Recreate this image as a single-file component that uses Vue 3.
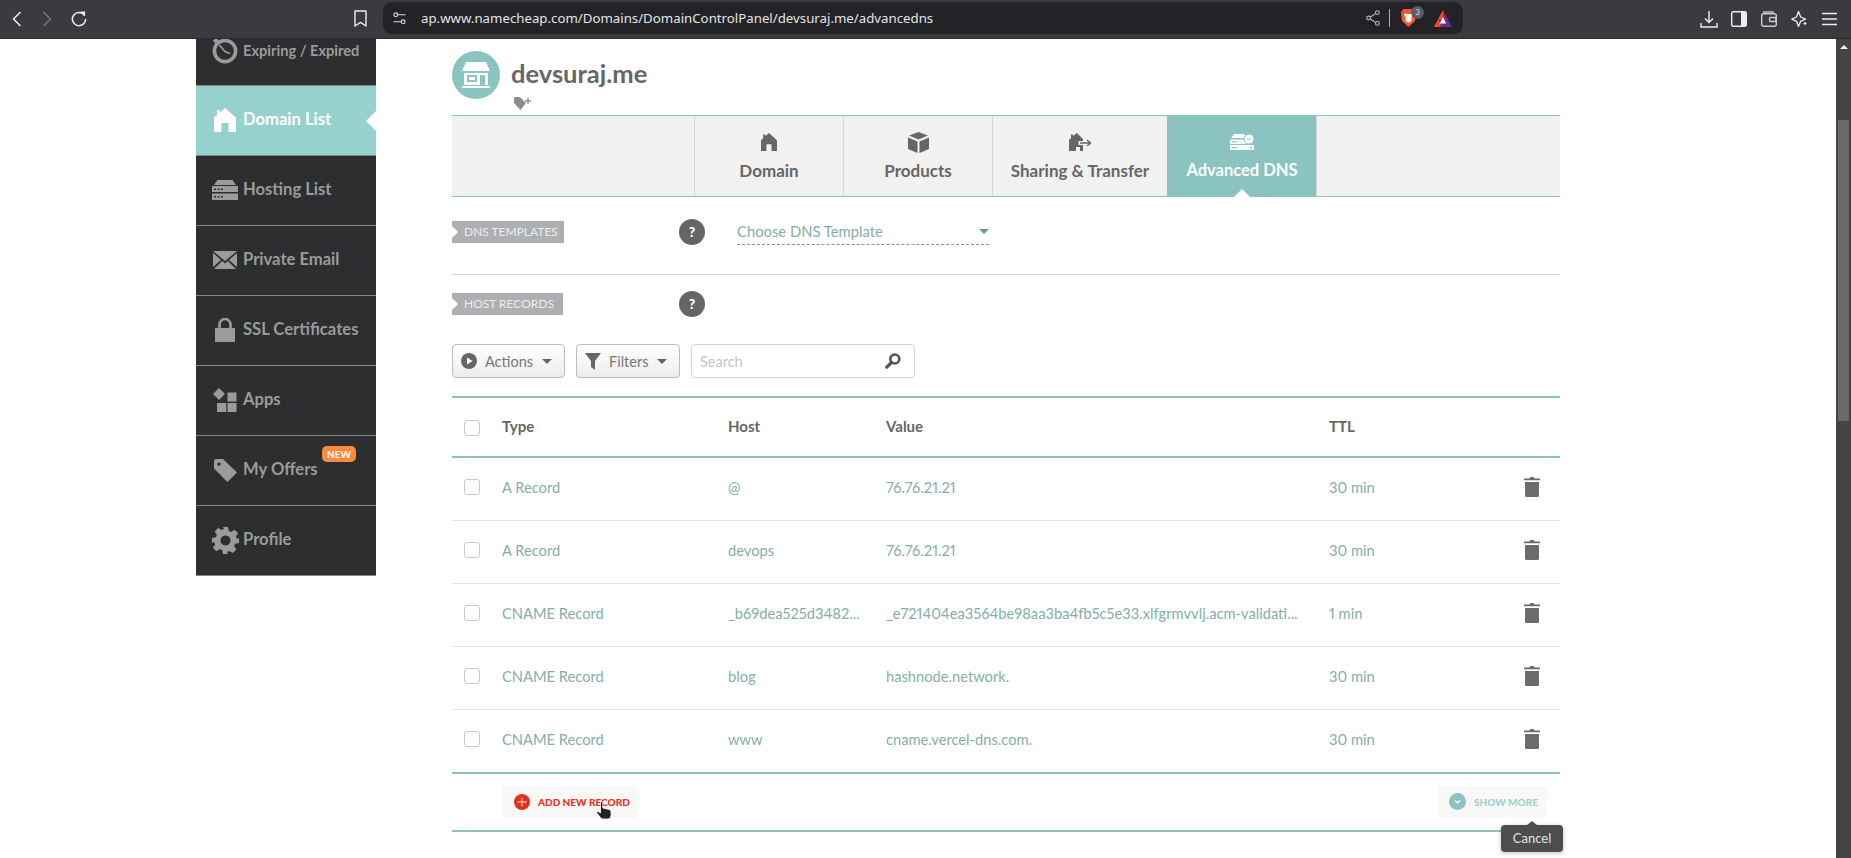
<script setup>
const navItems = [
  { label: 'Expiring / Expired', icon: 'clock', small: true },
  { label: 'Domain List', icon: 'home', active: true },
  { label: 'Hosting List', icon: 'server' },
  { label: 'Private Email', icon: 'mail' },
  { label: 'SSL Certificates', icon: 'lock' },
  { label: 'Apps', icon: 'apps' },
  { label: 'My Offers', icon: 'tag', badge: 'NEW' },
  { label: 'Profile', icon: 'gear' },
]

const tabs = [
  { label: 'Domain', icon: 'home' },
  { label: 'Products', icon: 'box' },
  { label: 'Sharing & Transfer', icon: 'share', wide: true },
  { label: 'Advanced DNS', icon: 'dns', active: true },
]

const records = [
  { type: 'A Record', host: '@', value: '76.76.21.21', ttl: '30 min' },
  { type: 'A Record', host: 'devops', value: '76.76.21.21', ttl: '30 min' },
  { type: 'CNAME Record', host: '_b69dea525d3482...', value: '_e721404ea3564be98aa3ba4fb5c5e33.xlfgrmvvlj.acm-validati...', ttl: '1 min' },
  { type: 'CNAME Record', host: 'blog', value: 'hashnode.network.', ttl: '30 min' },
  { type: 'CNAME Record', host: 'www', value: 'cname.vercel-dns.com.', ttl: '30 min' },
]
</script>

<template>
  <div class="page">
    <header class="toolbar">
      <div class="nav-btns">
        <svg width="10" height="16" viewBox="0 0 10 16"><path d="M8.5 1 1.5 8l7 7" fill="none" stroke="#eee" stroke-width="1.5" /></svg>
        <svg class="forward" width="10" height="16" viewBox="0 0 10 16"><path d="M1.5 1l7 7-7 7" fill="none" stroke="#77777c" stroke-width="1.5" /></svg>
        <svg class="reload" width="16" height="16" viewBox="0 0 16 16"><path d="M13.6 4.6A6.6 6.6 0 1 0 14.6 8" fill="none" stroke="#eee" stroke-width="1.5" /><path d="M9.5 0.5h4.6v4.6z" fill="#eee" /></svg>
      </div>
      <svg class="bookmark" width="13" height="17" viewBox="0 0 13 17"><path d="M1 1h11v15l-5.5-3.6L1 16z" fill="none" stroke="#eee" stroke-width="1.4" stroke-linejoin="round" /></svg>
      <div class="urlbar">
        <svg width="13" height="13" viewBox="0 0 13 13"><g fill="none" stroke="#ddd" stroke-width="1.1"><circle cx="2.8" cy="2.8" r="1.9" /><path d="M5 2.8h7.5M.5 9.8H8" /><circle cx="10.2" cy="9.8" r="1.9" /></g></svg>
        <span class="url-text">ap.www.namecheap.com/Domains/DomainControlPanel/devsuraj.me/advancedns</span>
        <svg class="share" width="14" height="16" viewBox="0 0 14 16"><g fill="none" stroke="#bbb" stroke-width="1.1"><circle cx="11.4" cy="2.6" r="1.9" /><circle cx="2.6" cy="8" r="1.9" /><circle cx="11.4" cy="13.4" r="1.9" /><path d="M4.3 7 9.7 3.6M4.3 9 9.7 12.4" /></g></svg>
        <span class="url-sep"></span>
        <div class="brave">
          <svg width="15" height="18" viewBox="0 0 15 18"><path d="M2.5 0h10L15 3l-1 9-6.5 6L1 12 0 3z" fill="#fb542b" /><path d="M4 4l2 1h3l2-1 .8 2-1.6 3 .6 2-2.3 2.5h-2L4.2 11l.6-2L3.2 6z" fill="#fff" /></svg>
          <span class="brave-count">3</span>
        </div>
        <svg class="bat" width="18" height="17" viewBox="0 0 18 17"><path d="M9 0l9 17H0z" fill="#662d91" /><path d="M9 0 4 9.5h5z" fill="#ff4724" /><path d="M9 0l4.5 9.5H9z" fill="#9e1f63" /><path d="M0 17l4-7.5 3 4-1 3.5z" fill="#ff4724" /><path d="M9 7l3.2 6.5H5.8z" fill="#fff" /></svg>
      </div>
      <div class="tool-icons">
        <svg width="18" height="18" viewBox="0 0 18 18"><path d="M9 1v11M5 8.5l4 4 4-4M1 13v4h16v-4" fill="none" stroke="#eee" stroke-width="1.4" /></svg>
        <svg width="16" height="16" viewBox="0 0 16 16"><rect x=".7" y=".7" width="14.6" height="14.6" rx="1.5" fill="none" stroke="#eee" stroke-width="1.4" /><rect x="10" y="1" width="5" height="14" fill="#eee" /></svg>
        <svg width="16" height="16" viewBox="0 0 16 16"><g fill="none" stroke="#ccc" stroke-width="1.4"><path d="M2 1h11" /><rect x=".7" y="2.7" width="14.6" height="12.6" rx="2" /><rect x="8.5" y="6.5" width="6.5" height="4" rx="1" /></g></svg>
        <svg width="16" height="18" viewBox="0 0 16 18"><path d="M7.5 1.5 9.6 7l4.9 2.2-4.9 2.1-2.1 5.2-2-5.2L.8 9.2 5.5 7z" fill="none" stroke="#eee" stroke-width="1.3" stroke-linejoin="round" /><path d="M12.5 13.5h3M14 12v3" stroke="#eee" stroke-width="1.2" /></svg>
        <svg width="15" height="14" viewBox="0 0 15 14"><path d="M0 1.5h15M0 7h15M0 12.5h15" stroke="#eee" stroke-width="1.5" /></svg>
      </div>
    </header>

    <div class="viewport">
      <main class="main">
        <aside class="sidebar">
          <a v-for="item in navItems" :key="item.label" class="nav-item" :class="{ active: item.active }">
            <span class="nav-icon">
              <svg v-if="item.icon === 'clock'" width="26" height="27" viewBox="0 0 26 27"><circle cx="13" cy="14" r="10.6" fill="none" stroke="currentColor" stroke-width="3.6" /><path d="M1 3.5 4.5 0.5 7 4 3 6.5z" fill="currentColor" /><path d="M7.5 8 13 14.5l5 2" fill="none" stroke="currentColor" stroke-width="1.6" /></svg>
              <svg v-else-if="item.icon === 'home'" width="22" height="24" viewBox="0 0 22 24"><path d="M11 0l11 9.5V24h-7.5v-9h-7v9H0V9.5l3-2.6V2h3v2.4z" fill="currentColor" /></svg>
              <svg v-else-if="item.icon === 'server'" width="26" height="20" viewBox="0 0 26 20"><path d="M5.5 0h15L24 5H2z" fill="currentColor" /><path d="M0 6h26v6H0zM0 13.5h26V20H0z" fill="currentColor" /><path d="M2 8.5h2v1.6H2zM5.5 8.5h2v1.6h-2zM9 8.5h2v1.6H9zM2 16h2v1.6H2zM5.5 16h2v1.6h-2zM9 16h2v1.6H9z" fill="#2d2e30" /></svg>
              <svg v-else-if="item.icon === 'mail'" width="24" height="18" viewBox="0 0 24 18"><path d="M0 0h24L12 10z" fill="currentColor" /><path d="M0 2l8 7-8 7zM24 2l-8 7 8 7z" fill="currentColor" /><path d="M1 18l8.2-8L12 12.4 14.8 10l8.2 8z" fill="currentColor" /></svg>
              <svg v-else-if="item.icon === 'lock'" width="20" height="24" viewBox="0 0 20 24"><path d="M0 10h20v14H0z" fill="currentColor" /><path d="M4.5 11V6.5a5.5 5.5 0 0 1 11 0V11" fill="none" stroke="currentColor" stroke-width="2.6" /></svg>
              <svg v-else-if="item.icon === 'apps'" width="24" height="24" viewBox="0 0 24 24"><path d="M6 0l6 6-6 6-6-6z" fill="currentColor" /><path d="M14.5 4.5h9v9h-9zM4 15h9.3v9H4zM14.5 15h9v9h-9z" fill="currentColor" /></svg>
              <svg v-else-if="item.icon === 'tag'" width="23" height="23" viewBox="0 0 23 23"><path fill-rule="evenodd" d="M0 1.5 1.5 0H9l14 13.500L13.500 23 0 9.500zM5 3.500a1.600 1.600 0 1 0 .01 0z" fill="currentColor" /></svg>
              <svg v-else width="27" height="27" viewBox="0 0 27 27"><path fill-rule="evenodd" d="M11 0h5l.8 3.900 2.400 1 3.400-2.200 3.500 3.500-2.200 3.400 1 2.400L27 11v5l-3.900.8-1 2.400 2.200 3.400-3.500 3.500-3.400-2.200-2.400 1L16 27h-5l-.8-3.900-2.400-1-3.400 2.200-3.500-3.500 2.200-3.400-1-2.400L0 16v-5l3.900-.8 1-2.400-2.200-3.400 3.500-3.500 3.400 2.200 2.400-1zM13.500 8.500a5 5 0 1 0 .01 0z" fill="currentColor" /></svg>
            </span>
            <span class="nav-label" :class="{ small: item.small }">{{ item.label }}</span>
            <span v-if="item.badge" class="nav-badge">{{ item.badge }}</span>
          </a>
        </aside>

        <section class="content">
          <div class="domain-head">
            <span class="avatar">
              <svg width="28" height="26" viewBox="0 0 28 26"><path d="M4 0h20l4 9H0z" fill="#fff" /><path d="M2 11h24v12H2z" fill="#fff" /><path d="M5 13h10v7H5zM18 13h5v10h-5z" fill="#8bc3c1" /><path d="M7 15h6v3H7z" fill="#fff" /><path d="M0 24h28v2H0z" fill="#fff" /></svg>
            </span>
            <div>
              <h1 class="domain-name">devsuraj.me</h1>
              <svg class="tag-add" width="17" height="13" viewBox="0 0 17 13"><path d="M0 1l1-1h5l6 6-5.500 7L0 6z" fill="#8d8d8d" /><path d="M11 4h6M14 1v6" stroke="#8d8d8d" stroke-width="1.400" /></svg>
            </div>
          </div>

          <nav class="tabs">
            <a v-for="tab in tabs" :key="tab.label" class="tab" :class="{ active: tab.active, wide: tab.wide }">
              <span class="tab-icon">
                <svg v-if="tab.icon === 'home'" width="16" height="18" viewBox="0 0 22 24" preserveAspectRatio="none"><path d="M11 0l11 9.500V24h-7.500v-9h-7v9H0V9.500l3-2.600V2h3v2.400z" fill="currentColor" /></svg>
                <svg v-else-if="tab.icon === 'box'" width="21" height="21" viewBox="0 0 21 21"><path d="M10.500 0 20 3.500 10.500 7.500 1 3.500z" fill="currentColor" /><path d="M0 5.500l9.500 4V21L0 17zM21 5.500l-9.500 4V21l9.500-4z" fill="currentColor" /></svg>
                <svg v-else-if="tab.icon === 'share'" width="23" height="18" viewBox="0 0 23 18"><path d="M8 0l6 6v2H9.500v4H14v6h-3v-4H7v4H0V7l2-2V1.500h2V3z" fill="currentColor" /><path d="M11 10h10M18 7l3.500 3-3.500 3" fill="none" stroke="currentColor" stroke-width="1.400" /></svg>
                <svg v-else width="24" height="16" viewBox="0 0 24 16"><path d="M4 0h10l3 4H1z" fill="currentColor" /><path d="M0 5.500h16V10H0zM0 11h24v5H0z" fill="currentColor" /><circle cx="19" cy="5" r="5" fill="currentColor" stroke="#8bc3c1" stroke-width="1" /><path d="M17 5h4" stroke="#8bc3c1" stroke-width="1" /><path d="M2 13h5v1.200H2zM20 13h2v1.200h-2zM2 7.200h5v1.200H2z" fill="#8bc3c1" /></svg>
              </span>
              <span>{{ tab.label }}</span>
            </a>
          </nav>

          <div class="setting-row first">
            <span class="ribbon">DNS TEMPLATES</span>
            <span class="help">?</span>
            <div class="template-select">
              <span class="template-text">Choose DNS Template</span>
              <span class="select-caret"></span>
            </div>
          </div>

          <div class="setting-row second">
            <span class="ribbon">HOST RECORDS</span>
            <span class="help">?</span>
          </div>

          <div class="actions-row">
            <button class="btn actions">
              <svg width="16" height="16" viewBox="0 0 16 16"><circle cx="8" cy="8" r="8" fill="#666" /><path d="M6 4.500 11.500 8 6 11.500z" fill="#fff" /></svg>
              <span>Actions</span>
              <span class="btn-caret"></span>
            </button>
            <button class="btn filters">
              <svg width="16" height="17" viewBox="0 0 16 17"><path d="M0 0h16L10 8v9l-4-3V8z" fill="#666" /></svg>
              <span>Filters</span>
              <span class="btn-caret"></span>
            </button>
            <div class="search">
              <span>Search</span>
              <svg width="16" height="16" viewBox="0 0 16 16"><circle cx="9.800" cy="6" r="4.500" fill="none" stroke="#555" stroke-width="2.600" /><path d="M6.500 9.500 1.800 14.200" stroke="#555" stroke-width="3.200" stroke-linecap="round" /></svg>
            </div>
          </div>

          <div class="records">
            <div class="rec-row rec-head">
              <span class="check"></span>
              <span>Type</span>
              <span>Host</span>
              <span>Value</span>
              <span>TTL</span>
              <span></span>
            </div>
            <div v-for="rec in records" :key="rec.host" class="rec-row rec-body">
              <span class="check"></span>
              <span>{{ rec.type }}</span>
              <span>{{ rec.host }}</span>
              <span>{{ rec.value }}</span>
              <span>{{ rec.ttl }}</span>
              <svg width="16" height="20" viewBox="0 0 16 20"><path d="M5.500 1.500Q5.500 0 7 0h2q1.500 0 1.500 1.500H16v1.700H0V1.500z" fill="#6b6b6d" /><path d="M1 5h14v13.500q0 1.500-1.500 1.500h-11Q1 20 1 18.500z" fill="#6b6b6d" /></svg>
            </div>
            <div class="rec-foot">
              <button class="foot-btn add">
                <svg width="16" height="16" viewBox="0 0 16 16"><circle cx="8" cy="8" r="8" fill="#e2321f" /><path d="M8 3.500v9M3.500 8h9" stroke="#f5a79d" stroke-width="1.300" /></svg>
                <span>ADD NEW RECORD</span>
              </button>
              <button class="foot-btn more">
                <svg width="17" height="17" viewBox="0 0 17 17"><circle cx="8.500" cy="8.500" r="8.500" fill="#8bc3c1" /><path d="M6 7.500l2.500 2.500L11 7.500" fill="none" stroke="#fff" stroke-width="1.200" /></svg>
                <span>SHOW MORE</span>
              </button>
              <svg class="cursor" width="16" height="19" viewBox="0 0 16 19"><path d="M4.500 1.200q1.300-1 2.300 0V7l6.500 1.500q1.700.5 1.700 2.200v3.800q0 3.500-3 3.500H7q-1.500 0-2.500-1.500L1 12.300q-.6-1.300.6-1.800 1-.3 2.900 1.500z" fill="#222" stroke="#fff" stroke-width=".8" /></svg>
              <span class="tooltip">Cancel</span>
            </div>
          </div>
        </section>
      </main>

      <div class="scrollbar">
        <span class="scroll-arrow"></span>
        <span class="scroll-thumb"></span>
      </div>
    </div>
  </div>
</template>

<style>
html, body {
  margin: 0;
  background: #fff;
  overflow: hidden;
}
</style>

<style scoped>
.page {
  width: 1851px;
  height: 858px;
  display: flex;
  flex-direction: column;
  overflow: hidden;
  font-family: Lato, "Liberation Sans", sans-serif;
  font-feature-settings: "pnum";
}

button {
  font-family: inherit;
  cursor: pointer;
}

.toolbar {
  height: 39px;
  flex: none;
  box-sizing: border-box;
  background: #3a3a3f;
  border-bottom: 1px solid #2a2a2e;
  display: flex;
  align-items: flex-start;
  position: relative;
}

.nav-btns {
  display: flex;
  align-items: center;
  height: 38px;
  padding-left: 12px;
  width: 354px;
  box-sizing: border-box;
  flex: none;
}

.forward {
  margin-left: 20px;
}

.reload {
  margin-left: 19px;
}

.bookmark {
  flex: none;
  margin-top: 10px;
}

.urlbar {
  margin-left: 16px;
  margin-top: 2px;
  width: 1080px;
  height: 32px;
  flex: none;
  box-sizing: border-box;
  background: #232327;
  border-radius: 9px;
  display: flex;
  align-items: center;
  padding: 0 11px 0 10px;
}

.url-text {
  margin-left: 15px;
  flex: 1;
  color: #e4e4e6;
  font-family: "Noto Sans", sans-serif;
  font-size: 13.25px;
  white-space: nowrap;
}

.url-sep {
  width: 1px;
  height: 18px;
  background: #aaa;
  margin: 0 11px 0 9px;
}

.brave {
  position: relative;
  display: flex;
}

.brave-count {
  position: absolute;
  left: 10px;
  top: -3px;
  width: 13px;
  height: 13px;
  border-radius: 50%;
  background: #5b5c68;
  color: #ddd;
  font-size: 8px;
  line-height: 13px;
  text-align: center;
}

.bat {
  margin-left: 18px;
}

.tool-icons {
  margin-left: 231px;
  margin-top: 10px;
  display: grid;
  grid-template-columns: repeat(5, 30px);
  align-items: center;
  justify-items: center;
}

.viewport {
  flex: 1;
  display: flex;
  min-height: 0;
  overflow: hidden;
}

.main {
  flex: 1;
  display: flex;
  align-items: flex-start;
  padding-left: 196px;
  min-width: 0;
}

.sidebar {
  width: 180px;
  flex: none;
  margin-top: -23.5px;
  background: #2d2e30;
}

.nav-item {
  height: 70px;
  box-sizing: border-box;
  border-bottom: 1px solid #848484;
  display: flex;
  align-items: center;
  padding-left: 14px;
  color: #9b9b9b;
  position: relative;
}

.nav-item.active {
  background: #97d1cd;
  color: #fff;
}

.nav-item.active::after {
  content: "";
  position: absolute;
  right: 0;
  top: 25px;
  border-style: solid;
  border-width: 10px 10px 10px 0;
  border-color: transparent #fff transparent transparent;
}

.nav-icon {
  width: 30px;
  display: flex;
  justify-content: center;
  flex: none;
}

.nav-label {
  margin: 0 0 2px 3px;
  font-size: 16.6px;
  font-weight: 700;
  white-space: nowrap;
}

.nav-label.small {
  margin-bottom: 0;
  font-size: 14.6px;
}

.nav-badge {
  position: absolute;
  left: 126px;
  top: 10px;
  width: 34px;
  height: 16px;
  border-radius: 5px;
  background: #ff8a3d;
  color: #fff;
  font-size: 10px;
  font-weight: 700;
  line-height: 16px;
  text-align: center;
}

.content {
  width: 1108px;
  margin-left: 76px;
  flex: none;
}

.domain-head {
  display: flex;
  margin-top: 12px;
  height: 64px;
}

.avatar {
  width: 48px;
  height: 48px;
  border-radius: 50%;
  background: #8bc3c1;
  display: flex;
  align-items: center;
  justify-content: center;
  flex: none;
}

.domain-name {
  margin: 6px 0 0 11px;
  font-size: 25.5px;
  line-height: 32px;
  font-weight: 700;
  color: #666;
}

.tag-add {
  display: block;
  margin: 8px 0 0 14px;
}

.tabs {
  height: 82px;
  box-sizing: border-box;
  background: #f1f1f1;
  border-top: 1px solid #8bc3c1;
  border-bottom: 1px solid #8bc3c1;
  display: flex;
  padding-left: 242px;
}

.tab {
  width: 149px;
  box-sizing: border-box;
  border-left: 1px solid #d6d6d6;
  display: flex;
  flex-direction: column;
  align-items: center;
  color: #666;
  font-size: 17px;
  font-weight: 700;
  position: relative;
  white-space: nowrap;
}

.tab.wide {
  width: 175px;
}

.tab.active {
  background: #8bc3c1;
  color: #fff;
  border-left-color: #8bc3c1;
  margin: -1px 0;
  height: 82px;
  box-shadow: 1px 0 0 #d6d6d6;
  font-size: 16.5px;
}

.tab.active::after {
  content: "";
  position: absolute;
  bottom: 0;
  left: 66px;
  border-style: solid;
  border-width: 0 8px 8px 8px;
  border-color: transparent transparent #fff transparent;
}

.tab-icon {
  height: 22px;
  margin: 15px 0 7px;
  display: flex;
  align-items: center;
}

.tab.active .tab-icon {
  margin-top: 16px;
}

.setting-row {
  display: grid;
  grid-template-columns: 227px 58px 1fr;
  align-items: center;
  height: 26px;
}

.setting-row.first {
  margin-top: 22px;
  padding-bottom: 29px;
  border-bottom: 1px solid #d5d5d5;
}

.setting-row.second {
  margin-top: 16px;
}

.ribbon {
  position: relative;
  justify-self: start;
  height: 22px;
  box-sizing: border-box;
  background: #aeafb3;
  color: #ececec;
  font-size: 12px;
  line-height: 22px;
  padding: 0 6px 0 12px;
  white-space: nowrap;
}

.second .ribbon {
  padding-right: 9px;
}

.ribbon::before {
  content: "";
  position: absolute;
  left: 0;
  top: 5px;
  border-style: solid;
  border-width: 6px 0 6px 6px;
  border-color: transparent transparent transparent #fff;
}

.help {
  width: 26px;
  height: 26px;
  border-radius: 50%;
  background: #666;
  color: #fff;
  font-size: 14px;
  font-weight: 900;
  line-height: 26px;
  text-align: center;
}

.template-select {
  width: 252px;
  height: 25px;
  box-sizing: border-box;
  border-bottom: 1px dashed #6f9d9a;
  color: #85aeab;
  font-size: 14.8px;
  display: flex;
  align-items: center;
  justify-content: space-between;
}

.template-text {
  margin-bottom: 2px;
}

.select-caret,
.btn-caret {
  border-style: solid;
  border-width: 5px 5px 0 5px;
  border-color: #6b9a97 transparent transparent transparent;
}

.btn-caret {
  border-color: #666 transparent transparent transparent;
}

.actions-row {
  display: flex;
  margin-top: 27px;
  height: 34px;
}

.btn {
  height: 34px;
  box-sizing: border-box;
  border: 1px solid #bcbcbc;
  border-radius: 4px;
  background: linear-gradient(#fff, #ececec);
  color: #777;
  font-size: 14.5px;
  display: flex;
  align-items: center;
  padding: 0 0 0 8px;
  gap: 8px;
}

.btn .btn-caret {
  margin-left: 1px;
}

.actions {
  width: 113px;
}

.filters {
  width: 104px;
  margin-left: 11px;
}

.search {
  width: 224px;
  margin-left: 11px;
  box-sizing: border-box;
  border: 1px solid #d5d5d5;
  border-radius: 4px;
  display: flex;
  align-items: center;
  justify-content: space-between;
  padding: 0 13px 0 8px;
  color: #c4c4c4;
  font-size: 14.5px;
}

.records {
  margin-top: 18px;
  border-top: 2px solid #8bc3c1;
  position: relative;
}

.rec-row {
  display: grid;
  grid-template-columns: 50px 226px 158px 443px 195px 1fr;
  align-items: center;
}

.rec-head {
  height: 60px;
  box-sizing: border-box;
  padding-bottom: 2px;
  border-bottom: 2px solid #8bc3c1;
  color: #666;
  font-size: 15px;
  font-weight: 700;
}

.rec-head .check {
  margin-top: 3px;
}

.rec-body {
  height: 63px;
  box-sizing: border-box;
  padding-bottom: 4px;
  border-bottom: 1px solid #e6e6e6;
  color: #85aeab;
  font-size: 14.7px;
  white-space: nowrap;
}

.check {
  width: 16px;
  height: 16px;
  box-sizing: border-box;
  border: 1px solid #c9c9c9;
  border-radius: 3px;
  margin-left: 12px;
}

.rec-foot {
  height: 60px;
  box-sizing: border-box;
  border-top: 2px solid #8bc3c1;
  border-bottom: 2px solid #8bc3c1;
  margin-top: -1px;
  display: flex;
  align-items: center;
  justify-content: space-between;
  padding: 0 13px 1px 50px;
  position: relative;
}

.foot-btn {
  height: 32px;
  border: 0;
  border-radius: 4px;
  background: #f8f8f8;
  display: flex;
  align-items: center;
  gap: 8px;
  font-size: 10px;
  font-weight: 900;
  white-space: nowrap;
}

.add {
  width: 136px;
  padding: 0 0 0 12px;
  color: #e8301f;
}

.more {
  width: 109px;
  padding: 0 0 0 11px;
  color: #9fcfcd;
}

.cursor {
  position: absolute;
  left: 144px;
  top: 27px;
}

.tooltip {
  position: absolute;
  left: 1049px;
  top: 51px;
  width: 62px;
  height: 27px;
  border-radius: 4px;
  background: #4d4d4d;
  color: #e2e2e2;
  font-size: 13px;
  line-height: 27px;
  text-align: center;
  box-shadow: 0 1px 4px rgba(0, 0, 0, 0.25);
}

.tooltip::before {
  content: "";
  position: absolute;
  left: 26px;
  top: -4px;
  border-style: solid;
  border-width: 0 5px 4px 5px;
  border-color: transparent transparent #4d4d4d transparent;
}

.scrollbar {
  width: 15px;
  flex: none;
  background: #444;
  position: relative;
}

.scroll-arrow {
  position: absolute;
  left: 4px;
  top: 6px;
  border-style: solid;
  border-width: 0 4px 4px 4px;
  border-color: transparent transparent #eee transparent;
}

.scroll-thumb {
  position: absolute;
  left: 2px;
  top: 81px;
  width: 11px;
  height: 301px;
  background: #6a6a6a;
}
</style>
